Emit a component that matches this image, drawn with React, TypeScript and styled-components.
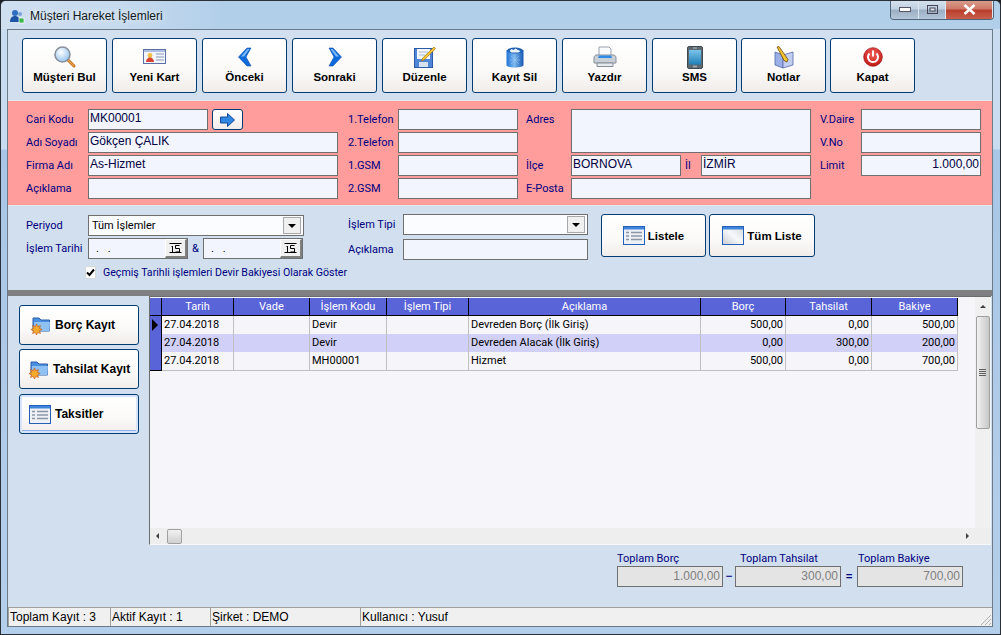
import React from "react";
import styled, { createGlobalStyle } from "styled-components";

const GlobalStyle = createGlobalStyle`
  html, body { margin: 0; padding: 0; background: #1c2026; }
  body { font-family: Roboto, "Liberation Sans", Arial, sans-serif; font-size: 11px; }
  * { box-sizing: border-box; }
`;

const boldFont = `"Liberation Sans", Arial, sans-serif`;

/* ---------- icons ---------- */

const SearchIcon = () => (
  <svg width="24" height="24" viewBox="0 0 24 24">
    <defs>
      <radialGradient id="lens" cx="0.4" cy="0.35" r="0.7">
        <stop offset="0" stopColor="#ffffff" />
        <stop offset="1" stopColor="#8fc0ee" />
      </radialGradient>
    </defs>
    <path d="M14.5 14.5L21 21" stroke="#b5651d" strokeWidth="3" strokeLinecap="round" />
    <path d="M14.5 14.5L21 21" stroke="#f0a94a" strokeWidth="1.2" strokeLinecap="round" />
    <circle cx="9.5" cy="9.5" r="7.5" fill="url(#lens)" stroke="#8a9099" strokeWidth="1.6" />
  </svg>
);

const CardIcon = () => (
  <svg width="24" height="16" viewBox="0 0 24 16">
    <rect x="0.5" y="0.5" width="22" height="14" fill="#f2f5fb" stroke="#5b6fa8" />
    <rect x="1" y="1" width="21" height="2" fill="#aebde0" />
    <circle cx="7" cy="6.5" r="2.4" fill="#f3c04a" />
    <path d="M3 13c0-3 2-4.5 4-4.5s4 1.5 4 4.5z" fill="#d8432f" />
    <path d="M13 5h8M13 8h8M13 11h8" stroke="#8c9ab8" />
  </svg>
);

const PrevIcon = () => (
  <svg width="16" height="20" viewBox="0 0 16 20">
    <path d="M10 1h4L9 10l5 9h-4L1.500 10z" fill="#0f6bdc" stroke="#0a4fae" strokeWidth="0.6" />
    <path d="M10.500 2h2L7 9.500H4z" fill="#7fbcf7" />
  </svg>
);

const NextIcon = () => (
  <svg width="16" height="20" viewBox="0 0 16 20">
    <path d="M6 1H2l5 9-5 9h4l8.500-9z" fill="#0f6bdc" stroke="#0a4fae" strokeWidth="0.6" />
    <path d="M5.500 2h-2L9 9.500h3z" fill="#7fbcf7" />
  </svg>
);

const EditIcon = () => (
  <svg width="22" height="22" viewBox="0 0 22 22">
    <rect x="0.5" y="2.5" width="18" height="19" fill="#4f86d8" stroke="#2b5aa6" />
    <rect x="3" y="3" width="13" height="10" fill="#f4f7fc" />
    <rect x="5" y="16" width="9" height="5" fill="#d7e2f3" />
    <path d="M5 6h9M5 9h6" stroke="#a8b8d4" />
    <path d="M20 1l1.6 1.6-11 11L7.5 15l1.2-3z" fill="#f4c430" stroke="#a8741a" strokeWidth="0.7" />
  </svg>
);

const TrashIcon = () => (
  <svg width="18" height="21" viewBox="0 0 18 21">
    <defs>
      <linearGradient id="bin" x1="0" x2="1" y1="0" y2="0">
        <stop offset="0" stopColor="#1f74d8" />
        <stop offset="0.45" stopColor="#7bb6ee" />
        <stop offset="1" stopColor="#1759b4" />
      </linearGradient>
    </defs>
    <path d="M0.5 3v15c0 1.5 3.8 2.5 8.5 2.5s8.500-1 8.500-2.500V3z" fill="url(#bin)" />
    <ellipse cx="9" cy="3.5" rx="8" ry="3" fill="#1c5fb4" />
    <path d="M3.5 4l2-2 2 1 2-1.500 2.500 1.500 2.500 1-2 1.500H5.500z" fill="#eef3f8" />
    <path d="M5 9l8 8M13 9l-8 8M9 8v10M4 13h10" stroke="#a5cdf3" strokeWidth="0.5" />
  </svg>
);

const PrinterIcon = () => (
  <svg width="24" height="22" viewBox="0 0 24 22">
    <path d="M6 1h10l2 2v8H6z" fill="#fafbfd" stroke="#9aa3ad" />
    <path d="M1 12c0-2 1-3 3-3h16c2 0 3 1 3 3v5H1z" fill="#c9cfd6" stroke="#868e98" />
    <path d="M6 9.5h12l1 2.500H5z" fill="#2f8be6" />
    <path d="M4 17h16v3.500H4z" fill="#e6e9ed" stroke="#868e98" />
  </svg>
);

const PhoneIcon = () => (
  <svg width="16" height="23" viewBox="0 0 16 23">
    <defs>
      <linearGradient id="screen" x1="0" x2="0" y1="0" y2="1">
        <stop offset="0" stopColor="#7cc4ea" />
        <stop offset="1" stopColor="#1f7fb8" />
      </linearGradient>
    </defs>
    <rect x="0.5" y="0.5" width="15" height="22" rx="1.5" fill="#5d6a72" stroke="#3f484e" />
    <rect x="2" y="4" width="12" height="14.5" fill="url(#screen)" />
    <path d="M6 2h4" stroke="#aeb8bf" />
    <rect x="6" y="19.5" width="4" height="2" fill="#9aa6ad" />
  </svg>
);

const NotesIcon = () => (
  <svg width="20" height="23" viewBox="0 0 20 23">
    <path d="M1 6l8 3v13l-8-3z" fill="#9ab0e6" stroke="#5468a8" strokeWidth="0.8" />
    <path d="M9 9l10-3v13l-10 3z" fill="#c3cff0" stroke="#5468a8" strokeWidth="0.8" />
    <path d="M3 1l2-.5 9 13-1 2.500-3-1.500z" fill="#f4c430" stroke="#6b4a10" strokeWidth="0.8" />
  </svg>
);

const PowerIcon = () => (
  <svg width="20" height="20" viewBox="0 0 20 20">
    <defs>
      <radialGradient id="power" cx="0.5" cy="0.35" r="0.7">
        <stop offset="0" stopColor="#f4605a" />
        <stop offset="1" stopColor="#bb1410" />
      </radialGradient>
    </defs>
    <circle cx="10" cy="10" r="9.3" fill="url(#power)" stroke="#9c1a16" strokeWidth="0.7" />
    <path d="M6.5 6.5a5 5 0 1 0 7 0" fill="none" stroke="#ffffff" strokeWidth="2" />
    <path d="M10 3.5v6" stroke="#ffffff" strokeWidth="2" />
  </svg>
);

const ArrowIcon = () => (
  <svg width="15" height="14" viewBox="0 0 15 14">
    <path d="M0.5 4h7V0.5L14.500 7l-7 6.500V10h-7z" fill="#2f86e0" stroke="#14489c" />
  </svg>
);

const ListIcon = () => (
  <svg width="22" height="19" viewBox="0 0 22 19">
    <rect x="0.5" y="0.5" width="21" height="18" fill="#eef1f5" stroke="#2460b8" />
    <rect x="1" y="1" width="20" height="2.5" fill="#3f86dc" />
    <path d="M3 6.5h3M3 10h3M3 13.500h3M8 6.500h11M8 10h11M8 13.500h11" stroke="#8c97a6" strokeWidth="1.5" />
  </svg>
);

const WindowIcon = () => (
  <svg width="22" height="19" viewBox="0 0 22 19">
    <defs>
      <linearGradient id="pane" x1="0" x2="1" y1="1" y2="0">
        <stop offset="0" stopColor="#c8ccd2" />
        <stop offset="0.5" stopColor="#f7f8fa" />
        <stop offset="1" stopColor="#d4d8de" />
      </linearGradient>
    </defs>
    <rect x="0.5" y="0.5" width="21" height="18" fill="url(#pane)" stroke="#2460b8" />
    <rect x="1" y="1" width="20" height="2.5" fill="#3f86dc" />
  </svg>
);

const FolderStarIcon = () => (
  <svg width="21" height="20" viewBox="0 0 21 20">
    <path d="M3 3h6l2 2h8.5v11H3z" fill="#4a8fe0" stroke="#2a5fa8" />
    <path d="M4 7h16l-.5 9H4z" fill="#8fc0f2" />
    <path d="M6.5 9l1.200 2.600 2.800-1-1 2.700 2.600 1.200-2.600 1.200 1 2.800-2.800-1-1.200 2.500-1.200-2.500-2.800 1 1-2.800L.9 14.500l2.600-1.200-1-2.700 2.800 1z" fill="#f6a92a" stroke="#c2501a" strokeWidth="0.6" />
  </svg>
);

const CalendarGlyph = () => (
  <svg width="13" height="12" viewBox="0 0 13 12">
    <path d="M0.5 1.500h12M0.5 10.500h12" stroke="#000000" />
    <path d="M3.500 4v6M2.500 4.500h1M6.500 3.500h4M6.500 3.500v3h4v3.500h-4" stroke="#000000" fill="none" />
  </svg>
);

/* ---------- window chrome ---------- */

const Window = styled.div`
  width: 1001px;
  height: 635px;
  display: flex;
  flex-direction: column;
  overflow: hidden;
  border: 1px solid #2a3038;
  border-radius: 6px 6px 0 0;
  background: linear-gradient(#c8dbef 0, #c8dbef 148px, #a9c6e6 149px, #b4cfea 100%);
`;

const TitleBar = styled.div`
  height: 28px;
  flex: none;
  display: flex;
  align-items: flex-start;
  padding-left: 8px;
  background: linear-gradient(90deg, #cfdff0 0, #c6daee 120px, #b2cfea 220px, #b2cfea 100%);
`;

const TitleIcon = styled.svg`
  margin-top: 7px;
  flex: none;
`;

const TitleText = styled.div`
  margin: 8px 0 0 5px;
  font-family: ${boldFont};
  font-size: 12px;
  line-height: 14px;
  color: #101820;
  text-shadow: 0 0 6px #ffffff;
`;

const WindowControls = styled.div`
  margin: -1px 6px 0 auto;
  display: flex;
  height: 20px;
  border: 1px solid #50647c;
  border-top: 0;
  border-radius: 0 0 4px 4px;
  overflow: hidden;
`;

const ControlButton = styled.div<{ $w: number; $close?: boolean }>`
  width: ${({ $w }) => $w}px;
  display: flex;
  align-items: center;
  justify-content: center;
  border-right: 1px solid #dfe8f0;
  background: ${({ $close }) =>
    $close
      ? "linear-gradient(#d9a091 0, #cf7a68 45%, #b93f2c 55%, #c8604c 100%)"
      : "linear-gradient(#d6e2ee 0, #c2d2e2 45%, #9bafc4 55%, #b5c7d9 100%)"};
`;

const Client = styled.div`
  flex: 1;
  margin: 0 7px 7px 6px;
  display: flex;
  flex-direction: column;
  border: 1px solid #6c7b8a;
  background: #d1dfee;
  min-height: 0;
`;

/* ---------- toolbar ---------- */

const Toolbar = styled.div`
  height: 70px;
  flex: none;
  display: flex;
  gap: 5px;
  padding: 8px 0 0 14px;
`;

const ToolButton = styled.div<{ $tight?: boolean }>`
  width: 85px;
  height: 55px;
  margin-left: ${({ $tight }) => ($tight ? "-1px" : "0")};
  display: flex;
  flex-direction: column;
  align-items: center;
  border: 1px solid #003c74;
  border-radius: 3px;
  background: linear-gradient(#ffffff 0, #fbfaf8 60%, #f0ecea 100%);
`;

const ToolIcon = styled.div`
  height: 24px;
  margin-top: 6px;
  display: flex;
  align-items: center;
  justify-content: center;
`;

const ToolLabel = styled.div`
  margin-top: 1px;
  font-family: ${boldFont};
  font-weight: 700;
  font-size: 11.5px;
  line-height: 14px;
  color: #000;
`;

/* ---------- customer panel ---------- */

const CustomerPanel = styled.div`
  height: 106px;
  flex: none;
  display: flex;
  align-items: flex-start;
  padding: 8px 0 0 18px;
  background: #ff9c9c;
  border-top: 1px solid #e8e8e8;
  border-bottom: 1px solid #e8e8e8;
`;

const FieldColumn = styled.div<{ $label: number; $input: number; $after: number }>`
  display: grid;
  grid-template-columns: ${({ $label }) => $label}px ${({ $input }) => $input}px;
  grid-auto-rows: 21px;
  row-gap: 2px;
  margin-right: ${({ $after }) => $after}px;
`;

const FieldLabel = styled.div`
  font-size: 11px;
  line-height: 22px;
  color: #000080;
  white-space: nowrap;
`;

const Field = styled.div<{ $tall?: boolean; $right?: boolean; $w?: number }>`
  min-width: 0;
  flex: ${({ $w }) => ($w ? `none` : "1")};
  ${({ $w }) => ($w ? `width: ${$w}px;` : "")}
  ${({ $tall }) => ($tall ? "grid-row: span 2;" : "")}
  padding: 0 1px;
  border: 1px solid #6f6f6f;
  background: #f3f5fe;
  font-family: ${boldFont};
  font-size: 12px;
  line-height: 17px;
  color: #000040;
  text-align: ${({ $right }) => ($right ? "right" : "left")};
  white-space: nowrap;
`;

const FieldRow = styled.div`
  display: flex;
  align-items: stretch;
`;

const GoButton = styled.div`
  flex: none;
  width: 31px;
  margin-left: 4px;
  display: flex;
  align-items: center;
  justify-content: center;
  border: 1px solid #003c74;
  border-radius: 3px;
  background: linear-gradient(#ffffff, #f0ecea);
`;

const CityLabel = styled(FieldLabel)`
  width: 20px;
  flex: none;
  padding-left: 4px;
`;

/* ---------- filter panel ---------- */

const FilterPanel = styled.div`
  height: 84px;
  flex: none;
  display: flex;
  align-items: flex-start;
  padding: 8px 0 0 18px;
`;

const FilterLeft = styled.div`
  width: 318px;
  flex: none;
  display: flex;
  flex-direction: column;
  padding-top: 1px;
`;

const FilterRow = styled.div<{ $gap?: number }>`
  display: flex;
  height: 21px;
  margin-bottom: ${({ $gap }) => $gap ?? 2}px;
`;

const RowLabel = styled(FieldLabel)<{ $w: number }>`
  width: ${({ $w }) => $w}px;
  flex: none;
`;

const Select = styled.div<{ $w: number }>`
  width: ${({ $w }) => $w}px;
  display: flex;
  align-items: center;
  justify-content: space-between;
  padding: 0 2px 0 3px;
  border: 1px solid #6f6f6f;
  background: #fbfcff;
  font-size: 11px;
  color: #000;
`;

const SelectArrow = styled.div`
  width: 18px;
  height: 17px;
  flex: none;
  display: flex;
  align-items: center;
  justify-content: center;
  background: #f0f0f0;
  border: 1px solid #a8a8a8;
  &::after {
    content: "";
    border-top: 4px solid #000;
    border-left: 4px solid transparent;
    border-right: 4px solid transparent;
  }
`;

const DateInput = styled.div`
  width: 100px;
  display: flex;
  justify-content: space-between;
  padding-left: 7px;
  border: 1px solid #6f6f6f;
  background: #f3f5fe;
  font-size: 11px;
  line-height: 19px;
  color: #000;
  letter-spacing: 3px;
`;

const DateButton = styled.div`
  width: 22px;
  display: flex;
  align-items: center;
  justify-content: center;
  background: #f0f0f0;
  border-top: 1px solid #ffffff;
  border-left: 1px solid #ffffff;
  border-right: 2px solid #808080;
  border-bottom: 2px solid #808080;
`;

const Ampersand = styled(FieldLabel)`
  width: 15px;
  text-align: center;
`;

const CheckRow = styled.div`
  display: flex;
  align-items: center;
  gap: 5px;
  margin: 3px 0 0 59px;
  height: 16px;
`;

const CheckBox = styled.div`
  width: 13px;
  height: 13px;
  display: flex;
  align-items: center;
  justify-content: center;
  background: #fff;
  border: 1px solid #d8d8d8;
`;

const CheckText = styled.div`
  margin-left: 2px;
  font-size: 10.6px;
  color: #000080;
  white-space: nowrap;
`;

const FilterMiddle = styled.div`
  width: 253px;
  flex: none;
  margin-left: 4px;
`;

const ActionButton = styled.div<{ $w: number }>`
  width: ${({ $w }) => $w}px;
  height: 43px;
  margin-right: 3px;
  display: flex;
  align-items: center;
  justify-content: center;
  gap: 3px;
  border: 1px solid #003c74;
  border-radius: 3px;
  background: linear-gradient(#ffffff 0, #fbfaf8 60%, #f0ecea 100%);
  font-family: ${boldFont};
  font-weight: 700;
  font-size: 11.5px;
  color: #000;
`;

const Divider = styled.div`
  height: 6px;
  flex: none;
  background: #808080;
`;

/* ---------- main area ---------- */

const MainArea = styled.div`
  flex: 1;
  min-height: 0;
  display: flex;
`;

const SideBar = styled.div`
  width: 141px;
  flex: none;
  display: flex;
  flex-direction: column;
  padding: 9px 0 0 11px;
`;

const SideButton = styled.div<{ $focused?: boolean; $indent: number }>`
  width: 120px;
  height: 40px;
  margin-bottom: 4px;
  margin-top: ${({ $focused }) => ($focused ? "1px" : "0")};
  display: flex;
  align-items: center;
  gap: 4px;
  padding-left: ${({ $indent }) => $indent}px;
  border: 1px solid #003c74;
  border-radius: 3px;
  background: linear-gradient(#ffffff 0, #fbfaf8 60%, #f0ecea 100%);
  font-family: ${boldFont};
  font-weight: 700;
  font-size: 12px;
  color: #000;
  ${({ $focused }) =>
    $focused ? "box-shadow: inset 0 0 0 2px #d6e4fb, inset 0 -3px 0 0 #8fb0ee;" : ""}
`;

const RightColumn = styled.div`
  flex: 1;
  min-width: 0;
  display: flex;
  flex-direction: column;
`;

const GridBox = styled.div`
  width: 842px;
  height: 249px;
  flex: none;
  display: flex;
  flex-direction: column;
  border-left: 1px solid #6c6c6c;
  border-top: 1px solid #6c6c6c;
  border-bottom: 1px solid #f5f7fa;
  background: #f5f5fa;
`;

const GridBody = styled.div`
  flex: 1;
  min-height: 0;
  display: flex;
`;

const GridContent = styled.div`
  flex: 1;
  min-width: 0;
  padding-top: 1px;
`;

const GridRow = styled.div<{ $h: number }>`
  display: grid;
  grid-template-columns: 12px 72px 76px 77px 82px 232px 85px 86px 86px;
  height: ${({ $h }) => $h}px;
`;

const HeaderCell = styled.div`
  background: #5864d8;
  border-right: 1px solid #000;
  border-bottom: 1px solid #000;
  color: #fff;
  font-size: 11px;
  line-height: 17px;
  text-align: center;
  white-space: nowrap;
`;

const Indicator = styled.div`
  background: #5864d8;
  border-right: 1px solid #000;
  border-bottom: 1px solid #000;
  display: flex;
  align-items: center;
  padding-left: 2px;
`;

const IndicatorArrow = styled.div`
  border-left: 6px solid #000;
  border-top: 6px solid transparent;
  border-bottom: 6px solid transparent;
`;

const Cell = styled.div<{ $alt?: boolean; $right?: boolean }>`
  background: ${({ $alt }) => ($alt ? "#d0d0f8" : "#f5f5fa")};
  border-right: 1px solid #c0c0c0;
  border-bottom: 1px solid #c0c0c0;
  padding: 0 2px;
  font-size: 11px;
  line-height: 18px;
  color: #000;
  text-align: ${({ $right }) => ($right ? "right" : "left")};
  white-space: nowrap;
`;

const VScroll = styled.div`
  width: 15px;
  flex: none;
  margin-right: 1px;
  display: flex;
  flex-direction: column;
  align-items: center;
  background: #f0f0f0;
`;

const ScrollUp = styled.div`
  height: 19px;
  flex: none;
  display: flex;
  align-items: center;
  &::after {
    content: "";
    border-bottom: 3px solid #404040;
    border-left: 3px solid transparent;
    border-right: 3px solid transparent;
  }
`;

const VThumb = styled.div`
  width: 14px;
  height: 113px;
  flex: none;
  display: flex;
  flex-direction: column;
  align-items: center;
  justify-content: center;
  gap: 1px;
  border: 1px solid #a0a0a0;
  border-radius: 2px;
  background: linear-gradient(90deg, #f2f2f2, #dcdcdc 50%, #c8c8c8);
`;

const Grip = styled.div`
  width: 7px;
  height: 1px;
  background: #606060;
`;

const HScroll = styled.div`
  height: 16px;
  flex: none;
  display: flex;
  align-items: center;
  padding-left: 6px;
  background: #eeeeee;
`;

const ScrollLeft = styled.div`
  border-right: 3px solid #404040;
  border-top: 3px solid transparent;
  border-bottom: 3px solid transparent;
`;

const ScrollRight = styled.div`
  margin-left: auto;
  margin-right: 22px;
  border-left: 3px solid #404040;
  border-top: 3px solid transparent;
  border-bottom: 3px solid transparent;
`;

const HThumb = styled.div`
  width: 15px;
  height: 15px;
  margin-left: 8px;
  border: 1px solid #a0a0a0;
  border-radius: 2px;
  background: linear-gradient(#f2f2f2, #d0d0d0);
`;

const Totals = styled.div`
  display: flex;
  align-items: flex-end;
  padding: 6px 0 0 468px;
`;

const TotalBlock = styled.div<{ $w: number }>`
  width: ${({ $w }) => $w}px;
  flex: none;
  display: flex;
  flex-direction: column;
`;

const TotalLabel = styled.div<{ $indent?: number }>`
  padding-left: ${({ $indent }) => $indent ?? 0}px;
  font-size: 11px;
  line-height: 15px;
  color: #000080;
  white-space: nowrap;
`;

const TotalValue = styled.div`
  height: 21px;
  padding: 0 2px;
  border: 1px solid #6f6f6f;
  background: #e4e4e4;
  font-family: ${boldFont};
  font-size: 12px;
  line-height: 19px;
  color: #808080;
  text-align: right;
`;

const Operator = styled.div<{ $w: number }>`
  width: ${({ $w }) => $w}px;
  flex: none;
  height: 21px;
  font-size: 14px;
  line-height: 20px;
  text-align: center;
  color: #000080;
`;

const StatusBar = styled.div`
  height: 19px;
  flex: none;
  display: flex;
  gap: 3px;
  background: #f0f0f0;
  border-top: 1px solid #a0a0a0;
  position: relative;
`;

const StatusCell = styled.div<{ $w: number }>`
  width: ${({ $w }) => $w}px;
  flex: none;
  padding-left: 1px;
  border-left: 1px solid #a0a0a0;
  font-family: ${boldFont};
  font-size: 12px;
  line-height: 19px;
  color: #000;
  white-space: nowrap;
`;

const SizeGrip = styled.svg`
  position: absolute;
  right: 0;
  bottom: 0;
`;

/* ---------- data ---------- */

const tools = [
  { label: "Müşteri Bul", icon: <SearchIcon /> },
  { label: "Yeni Kart", icon: <CardIcon /> },
  { label: "Önceki", icon: <PrevIcon /> },
  { label: "Sonraki", icon: <NextIcon /> },
  { label: "Düzenle", icon: <EditIcon /> },
  { label: "Kayıt Sil", icon: <TrashIcon /> },
  { label: "Yazdır", icon: <PrinterIcon /> },
  { label: "SMS", icon: <PhoneIcon /> },
  { label: "Notlar", icon: <NotesIcon />, tight: true },
  { label: "Kapat", icon: <PowerIcon />, tight: true },
];

const columns = ["Tarih", "Vade", "İşlem Kodu", "İşlem Tipi", "Açıklama", "Borç", "Tahsilat", "Bakiye"];

const rows = [
  ["27.04.2018", "", "Devir", "", "Devreden Borç (İlk Giriş)", "500,00", "0,00", "500,00"],
  ["27.04.2018", "", "Devir", "", "Devreden Alacak (İlk Giriş)", "0,00", "300,00", "200,00"],
  ["27.04.2018", "", "MH00001", "", "Hizmet", "500,00", "0,00", "700,00"],
];

export default function App() {
  return (
    <>
      <GlobalStyle />
      <Window>
        <TitleBar>
          <TitleIcon width="16" height="16" viewBox="0 0 16 16">
            <circle cx="6" cy="5" r="3" fill="#2f6fc0" />
            <path d="M1 14c0-4 2-6 5-6s5 2 5 6z" fill="#1d55a4" />
            <circle cx="11" cy="6" r="2" fill="#7aa4d8" />
            <rect x="10" y="10" width="5" height="5" fill="#3cb54a" stroke="#ffffff" strokeWidth="0.7" />
          </TitleIcon>
          <TitleText>Müşteri Hareket İşlemleri</TitleText>
          <WindowControls>
            <ControlButton $w={28}>
              <svg width="12" height="6"><rect x="0.5" y="0.5" width="11" height="4" fill="#fff" stroke="#556" /></svg>
            </ControlButton>
            <ControlButton $w={27}>
              <svg width="11" height="10"><rect x="0.5" y="0.5" width="10" height="8" fill="none" stroke="#445" /><rect x="3" y="3" width="5" height="3" fill="#dfe8f0" stroke="#445" /></svg>
            </ControlButton>
            <ControlButton $w={47} $close>
              <svg width="13" height="11" viewBox="0 0 13 11"><path d="M1.500 1l10 9M11.500 1l-10 9" stroke="#fff" strokeWidth="2.6" /></svg>
            </ControlButton>
          </WindowControls>
        </TitleBar>
        <Client>
          <Toolbar>
            {tools.map((t) => (
              <ToolButton key={t.label} $tight={t.tight}>
                <ToolIcon>{t.icon}</ToolIcon>
                <ToolLabel>{t.label}</ToolLabel>
              </ToolButton>
            ))}
          </Toolbar>

          <CustomerPanel>
            <FieldColumn $label={62} $input={250} $after={10}>
              <FieldLabel>Cari Kodu</FieldLabel>
              <FieldRow>
                <Field $w={120}>MK00001</Field>
                <GoButton><ArrowIcon /></GoButton>
              </FieldRow>
              <FieldLabel>Adı Soyadı</FieldLabel>
              <Field>Gökçen ÇALIK</Field>
              <FieldLabel>Firma Adı</FieldLabel>
              <Field>As-Hizmet</Field>
              <FieldLabel>Açıklama</FieldLabel>
              <Field />
            </FieldColumn>
            <FieldColumn $label={50} $input={120} $after={8}>
              <FieldLabel>1.Telefon</FieldLabel>
              <Field />
              <FieldLabel>2.Telefon</FieldLabel>
              <Field />
              <FieldLabel>1.GSM</FieldLabel>
              <Field />
              <FieldLabel>2.GSM</FieldLabel>
              <Field />
            </FieldColumn>
            <FieldColumn $label={45} $input={240} $after={9}>
              <FieldLabel>Adres</FieldLabel>
              <Field $tall />
              <FieldLabel />
              <FieldLabel>İlçe</FieldLabel>
              <FieldRow>
                <Field>BORNOVA</Field>
                <CityLabel>İl</CityLabel>
                <Field>İZMİR</Field>
              </FieldRow>
              <FieldLabel>E-Posta</FieldLabel>
              <Field />
            </FieldColumn>
            <FieldColumn $label={41} $input={120} $after={0}>
              <FieldLabel>V.Daire</FieldLabel>
              <Field />
              <FieldLabel>V.No</FieldLabel>
              <Field />
              <FieldLabel>Limit</FieldLabel>
              <Field $right>1.000,00</Field>
            </FieldColumn>
          </CustomerPanel>

          <FilterPanel>
            <FilterLeft>
              <FilterRow>
                <RowLabel $w={62}>Periyod</RowLabel>
                <Select $w={216}>Tüm İşlemler<SelectArrow /></Select>
              </FilterRow>
              <FilterRow>
                <RowLabel $w={62}>İşlem Tarihi</RowLabel>
                <DateInput>. .<DateButton><CalendarGlyph /></DateButton></DateInput>
                <Ampersand>&amp;</Ampersand>
                <DateInput>. .<DateButton><CalendarGlyph /></DateButton></DateInput>
              </FilterRow>
              <CheckRow>
                <CheckBox>
                  <svg width="9" height="9" viewBox="0 0 9 9"><path d="M1 4.500l2.500 2.500L8 1.500" fill="none" stroke="#000" strokeWidth="2" /></svg>
                </CheckBox>
                <CheckText>Geçmiş Tarihli işlemleri Devir Bakiyesi Olarak Göster</CheckText>
              </CheckRow>
            </FilterLeft>
            <FilterMiddle>
              <FilterRow $gap={4}>
                <RowLabel $w={55}>İşlem Tipi</RowLabel>
                <Select $w={185}><span /><SelectArrow /></Select>
              </FilterRow>
              <FilterRow>
                <RowLabel $w={55}>Açıklama</RowLabel>
                <Field $w={185} />
              </FilterRow>
            </FilterMiddle>
            <ActionButton $w={105}><ListIcon />Listele</ActionButton>
            <ActionButton $w={106}><WindowIcon />Tüm Liste</ActionButton>
          </FilterPanel>

          <Divider />

          <MainArea>
            <SideBar>
              <SideButton $indent={10}><FolderStarIcon />Borç Kayıt</SideButton>
              <SideButton $indent={8}><FolderStarIcon />Tahsilat Kayıt</SideButton>
              <SideButton $indent={9} $focused><ListIcon />Taksitler</SideButton>
            </SideBar>
            <RightColumn>
              <GridBox>
                <GridBody>
                  <GridContent>
                    <GridRow $h={18}>
                      <Indicator />
                      {columns.map((c) => <HeaderCell key={c}>{c}</HeaderCell>)}
                    </GridRow>
                    {rows.map((r, i) => (
                      <GridRow key={i} $h={18}>
                        <Indicator>{i === 0 && <IndicatorArrow />}</Indicator>
                        {r.map((v, j) => (
                          <Cell key={j} $alt={i === 1} $right={j >= 5}>{v}</Cell>
                        ))}
                      </GridRow>
                    ))}
                  </GridContent>
                  <VScroll>
                    <ScrollUp />
                    <VThumb><Grip /><Grip /><Grip /><Grip /></VThumb>
                  </VScroll>
                </GridBody>
                <HScroll>
                  <ScrollLeft />
                  <HThumb />
                  <ScrollRight />
                </HScroll>
              </GridBox>
              <Totals>
                <TotalBlock $w={106}>
                  <TotalLabel>Toplam Borç</TotalLabel>
                  <TotalValue>1.000,00</TotalValue>
                </TotalBlock>
                <Operator $w={12}>−</Operator>
                <TotalBlock $w={106}>
                  <TotalLabel $indent={5}>Toplam Tahsilat</TotalLabel>
                  <TotalValue>300,00</TotalValue>
                </TotalBlock>
                <Operator $w={16}>=</Operator>
                <TotalBlock $w={106}>
                  <TotalLabel $indent={1}>Toplam Bakiye</TotalLabel>
                  <TotalValue>700,00</TotalValue>
                </TotalBlock>
              </Totals>
            </RightColumn>
          </MainArea>

          <StatusBar>
            <StatusCell $w={99}>Toplam Kayıt : 3</StatusCell>
            <StatusCell $w={97}>Aktif Kayıt : 1</StatusCell>
            <StatusCell $w={147}>Şirket : DEMO</StatusCell>
            <StatusCell $w={300}>Kullanıcı : Yusuf</StatusCell>
            <SizeGrip width="14" height="14" viewBox="0 0 14 14">
              <path d="M13 3L3 13M13 7l-6 6M13 11l-2 2" stroke="#b0b0b0" />
            </SizeGrip>
          </StatusBar>
        </Client>
      </Window>
    </>
  );
}
